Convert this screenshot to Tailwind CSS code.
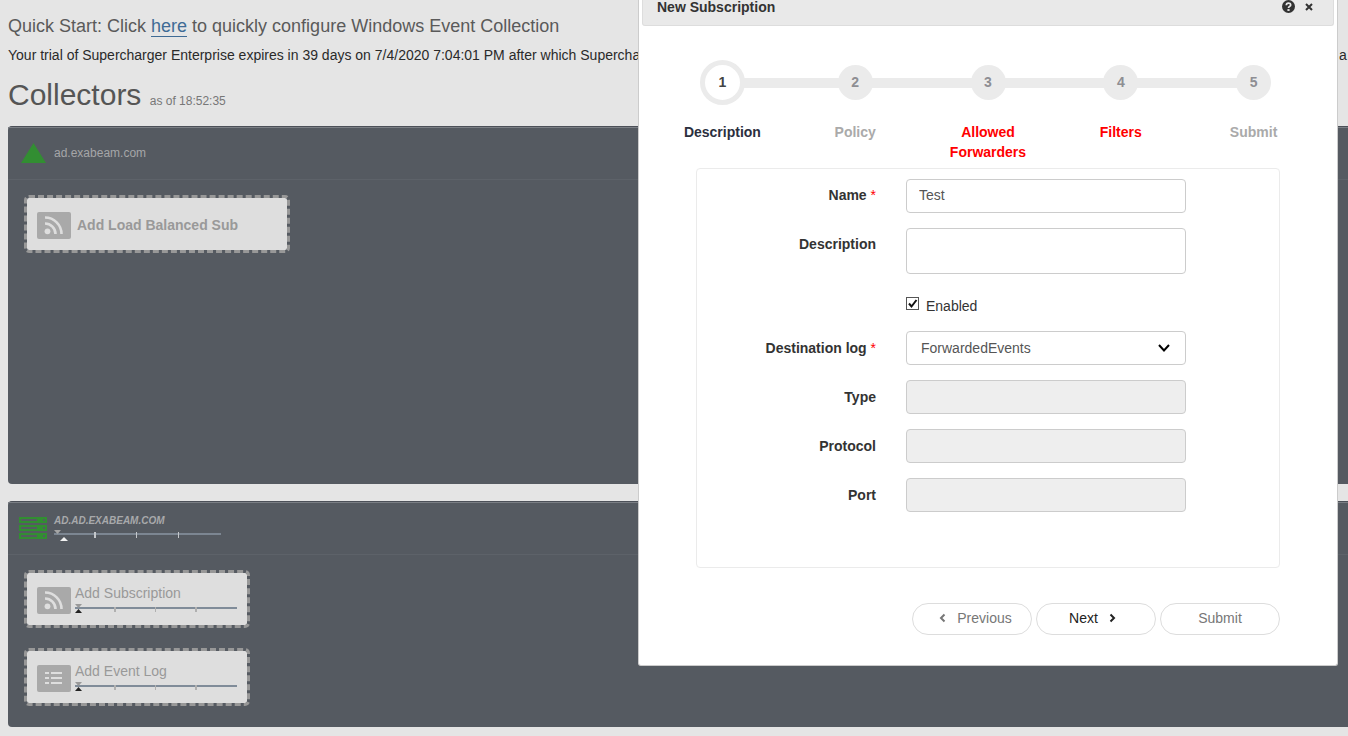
<!DOCTYPE html>
<html lang="en">
<head>
    <meta charset="UTF-8">
    <meta name="viewport" content="width=device-width, initial-scale=1.0">
    <title>Supercharger - Collectors</title>
    <script src="https://cdn.jsdelivr.net/npm/@tailwindcss/browser@4"></script>
</head>
<body class="relative min-h-screen overflow-x-hidden bg-[#e5e5e5] font-['Liberation_Sans',Arial,sans-serif] text-sm text-[#333]">

    <main class="pl-2 pt-4">
        <h4 class="text-lg leading-5 text-[#5a5a5a]">Quick Start: Click <a href="#" class="border-b border-[#3f6b95] text-[#3f6b95]">here</a> to quickly configure Windows Event Collection</h4>
        <p class="mt-[9px] flex overflow-hidden whitespace-nowrap leading-5 text-[#2a2a2a]">
            <span class="flex-1 overflow-hidden">Your trial of Supercharger Enterprise expires in 39 days on 7/4/2020 7:04:01 PM after which Supercharger</span>
            <span class="w-[9px]">a</span>
        </p>
        <h1 class="mt-[13px] text-[30px] leading-[33px] text-[#555]">Collectors <small class="text-xs text-[#777]">as of 18:52:35</small></h1>

        <!-- domain -->
        <section class="mt-[15px] h-[358px] rounded-l border-t border-[#4c5058] bg-[#555a61]">
            <header class="flex h-[53px] items-center gap-2 border-b border-t border-b-[#5d6269] border-t-[#7b7f85] pb-[2px] pl-[13px]">
                <svg class="h-5 w-[25px]" viewBox="0 0 25 20" fill="#328e32"><path d="M12.500 0 L25 20 H0Z"/></svg>
                <span class="text-xs text-[#a5a6a8]">ad.exabeam.com</span>
            </header>
            <div class="px-4 py-[15px]">
                <button type="button" class="flex h-[58px] w-[266px] items-center gap-[6px] rounded-[5px] border-3 border-dashed border-[#989898] bg-[#dedede] bg-clip-padding px-[10px] pt-[2px] font-bold text-[#999]">
                    <svg class="h-[27px] w-[34px]" viewBox="0 0 34 27"><rect width="34" height="27" rx="2" fill="#a9a9a9"/><circle cx="10.500" cy="19.300" r="2.900" fill="#dedede"/><g fill="none" stroke="#dedede" stroke-width="2.600"><path d="M8 11.500A10.500 10.500 0 0 1 18.500 22"/><path d="M8 5.500A16.500 16.500 0 0 1 24.500 22"/></g></svg>
                    Add Load Balanced Sub
                </button>
            </div>
        </section>

        <!-- collector -->
        <section class="mt-[17px] h-[226px] rounded-l border-t border-[#4c5058] bg-[#555a61]">
            <header class="flex h-[53px] items-center gap-[7px] border-b border-t border-b-[#5d6269] border-t-[#7b7f85] pb-[2px] pl-[11px]">
                <svg class="h-[22px] w-7" viewBox="0 0 28 22">
                    <path fill="#328e32" d="M0 0h28v6H0zM0 8h28v6H0zM0 16h28v6H0z"/>
                    <path fill="#555a61" d="M2 2h16v2H2zM24 2h2v2h-2zM2 10h16v2H2zM24 10h2v2h-2zM2 18h16v2H2zM24 18h2v2h-2z"/>
                </svg>
                <div>
                    <div class="text-[10px] font-bold italic leading-3 text-[#a8a9ab]">AD.AD.EXABEAM.COM</div>
                    <svg class="h-[14px] w-[167px]" viewBox="0 0 167 14">
                        <path fill="#7c8692" d="M0 6h167v2H0z"/>
                        <path fill="#c4c7cb" d="M40 5h2v6h-2zM82 5h1v6h-1zM124 5h1v6h-1z"/>
                        <path fill="#a5a5a5" d="M0 3h7L3.500 7z"/>
                        <path fill="#f2f2f2" d="M6 14h8l-4-4z"/>
                    </svg>
                </div>
            </header>
            <div class="flex flex-col gap-5 px-4 py-[15px]">
                <button type="button" class="flex h-[58px] w-[226px] items-center gap-1 rounded-[5px] border-3 border-dashed border-[#989898] bg-[#dedede] bg-clip-padding px-[10px] pt-[2px] text-left text-[#999]">
                    <svg class="h-[27px] w-[34px]" viewBox="0 0 34 27"><rect width="34" height="27" rx="2" fill="#a9a9a9"/><circle cx="10.500" cy="19.300" r="2.900" fill="#dedede"/><g fill="none" stroke="#dedede" stroke-width="2.600"><path d="M8 11.500A10.500 10.500 0 0 1 18.500 22"/><path d="M8 5.500A16.500 16.500 0 0 1 24.500 22"/></g></svg>
                    <span class="flex flex-col gap-px pb-[3px]">
                        <span class="leading-5">Add Subscription</span>
                        <svg class="h-[10px] w-[162px]" viewBox="0 0 162 10">
                            <path fill="#808c99" d="M0 3h162v2H0z"/>
                            <path fill="#b0b0b0" d="M39 3h2v5h-2zM80 3h1v5h-1zM120 3h2v5h-2z"/>
                            <path fill="#999" d="M0 0h7L3.500 4z"/>
                            <path fill="#222" d="M0 9h7L3.500 5z"/>
                        </svg>
                    </span>
                </button>
                <button type="button" class="flex h-[58px] w-[226px] items-center gap-1 rounded-[5px] border-3 border-dashed border-[#989898] bg-[#dedede] bg-clip-padding px-[10px] pt-[2px] text-left text-[#999]">
                    <svg class="h-[27px] w-[34px]" viewBox="0 0 34 27"><rect width="34" height="27" rx="2" fill="#a9a9a9"/><path fill="#dedede" d="M8 7h4v2H8zM14 7h11v2H14zM8 12h4v2H8zM14 12h11v2H14zM8 17h4v2H8zM14 17h11v2H14z"/></svg>
                    <span class="flex flex-col gap-px pb-[3px]">
                        <span class="leading-5">Add Event Log</span>
                        <svg class="h-[10px] w-[162px]" viewBox="0 0 162 10">
                            <path fill="#808c99" d="M0 3h162v2H0z"/>
                            <path fill="#b0b0b0" d="M39 3h2v5h-2zM80 3h1v5h-1zM120 3h2v5h-2z"/>
                            <path fill="#999" d="M0 0h7L3.500 4z"/>
                            <path fill="#222" d="M0 9h7L3.500 5z"/>
                        </svg>
                    </span>
                </button>
            </div>
        </section>
    </main>

    <!-- new subscription dialog -->
    <div role="dialog" aria-labelledby="dialog-title" class="absolute right-[10px] top-0 w-[700px] rounded-b-[3px] border border-t-0 border-[#ccc] bg-white">
        <div class="mx-[3px] flex h-[26px] items-start justify-between rounded-b-[3px] border border-t-0 border-[#ddd] bg-[#e9e9e9] px-[14px] leading-[14px]">
            <h2 id="dialog-title" class="font-bold">New Subscription</h2>
            <div class="flex gap-2 pr-1">
                <button type="button" aria-label="Help">
                    <svg class="size-[13px]" viewBox="0 0 12 12"><circle cx="6" cy="6" r="6" fill="#333"/><path d="M4 4.800C4 2.200 8 2.200 8 4.600C8 6 6 5.800 6 7.400" fill="none" stroke="#e9e9e9" stroke-width="1.600"/><path fill="#e9e9e9" d="M5 8.400h2v1.700H5z"/></svg>
                </button>
                <button type="button" aria-label="Close">
                    <svg class="size-3" viewBox="0 0 12 12"><path d="M3 3l6 6M9 3l-6 6" stroke="#333" stroke-width="2"/></svg>
                </button>
            </div>
        </div>

        <ol class="mx-[17px] mt-[34px] grid grid-cols-5 text-center font-bold leading-5 text-[#aaa]">
            <li>
                <div class="flex h-[45px] items-center">
                    <span class="-mx-px flex-1"></span>
                    <span class="flex size-[45px] items-center justify-center rounded-full border-5 border-[#ebebeb] pb-[2px] text-[#444]">1</span>
                    <span class="-mx-px h-[10px] flex-1 bg-[#ebebeb]"></span>
                </div>
                <div class="mt-[17px] text-[#2b2f3e]">Description</div>
            </li>
            <li>
                <div class="flex h-[45px] items-center">
                    <span class="-mx-px h-[10px] flex-1 bg-[#ebebeb]"></span>
                    <span class="flex size-[35px] items-center justify-center rounded-full bg-[#ebebeb] pb-[2px] text-[#8e8e93]">2</span>
                    <span class="-mx-px h-[10px] flex-1 bg-[#ebebeb]"></span>
                </div>
                <div class="mt-[17px]">Policy</div>
            </li>
            <li>
                <div class="flex h-[45px] items-center">
                    <span class="-mx-px h-[10px] flex-1 bg-[#ebebeb]"></span>
                    <span class="flex size-[35px] items-center justify-center rounded-full bg-[#ebebeb] pb-[2px] text-[#8e8e93]">3</span>
                    <span class="-mx-px h-[10px] flex-1 bg-[#ebebeb]"></span>
                </div>
                <div class="mt-[17px] text-[#f00]">Allowed<br>Forwarders</div>
            </li>
            <li>
                <div class="flex h-[45px] items-center">
                    <span class="-mx-px h-[10px] flex-1 bg-[#ebebeb]"></span>
                    <span class="flex size-[35px] items-center justify-center rounded-full bg-[#ebebeb] pb-[2px] text-[#8e8e93]">4</span>
                    <span class="-mx-px h-[10px] flex-1 bg-[#ebebeb]"></span>
                </div>
                <div class="mt-[17px] text-[#f00]">Filters</div>
            </li>
            <li>
                <div class="flex h-[45px] items-center">
                    <span class="-mx-px h-[10px] flex-1 bg-[#ebebeb]"></span>
                    <span class="flex size-[35px] items-center justify-center rounded-full bg-[#ebebeb] pb-[2px] text-[#8e8e93]">5</span>
                    <span class="-mx-px flex-1"></span>
                </div>
                <div class="mt-[17px]">Submit</div>
            </li>
        </ol>

        <form class="px-[57px] pb-[30px] pt-[6px]">
            <div class="grid grid-cols-[179px_280px] gap-x-[30px] gap-y-[15px] rounded border border-[#ebebeb] pb-[55px] pt-[10px]">
                <label for="name" class="pt-[6px] text-right font-bold leading-5">Name <span class="font-normal text-[#f00]">*</span></label>
                <input id="name" type="text" value="Test" class="h-[34px] rounded border border-[#ccc] px-3 pb-[2px] text-[#555]">

                <label for="description" class="pt-[6px] text-right font-bold leading-5">Description</label>
                <textarea id="description" class="h-[46px] resize-none rounded border border-[#ccc] px-3 py-[6px] text-[#555]"></textarea>

                <div class="col-start-2 flex gap-[7px] pt-2">
                    <span class="relative h-[13px] w-[13px]">
                        <input id="enabled" type="checkbox" checked class="block size-[13px] appearance-none border border-[#555] bg-white">
                        <svg class="pointer-events-none absolute left-0 top-0 size-[13px]" viewBox="0 0 13 13"><path d="M3 6.500L5.500 9.500L10.500 3" fill="none" stroke="#111" stroke-width="2"/></svg>
                    </span>
                    <label for="enabled" class="leading-[19px]">Enabled</label>
                </div>

                <label for="log" class="pt-[7px] text-right font-bold leading-5">Destination log <span class="font-normal text-[#f00]">*</span></label>
                <div class="relative">
                    <select id="log" class="block h-[34px] w-full appearance-none rounded border border-[#ccc] bg-white px-[14px] text-[#555]">
                        <option>ForwardedEvents</option>
                    </select>
                    <svg class="pointer-events-none absolute right-4 top-3 h-[10px] w-3" viewBox="0 0 12 10"><path d="M1 2l5 5.500L11 2" fill="none" stroke="#000" stroke-width="2"/></svg>
                </div>

                <label for="type" class="pt-[7px] text-right font-bold leading-5">Type</label>
                <input id="type" type="text" disabled class="h-[34px] rounded border border-[#ccc] bg-[#eee] px-3">

                <label for="protocol" class="pt-[7px] text-right font-bold leading-5">Protocol</label>
                <input id="protocol" type="text" disabled class="h-[34px] rounded border border-[#ccc] bg-[#eee] px-3">

                <label for="port" class="pt-[7px] text-right font-bold leading-5">Port</label>
                <input id="port" type="text" disabled class="h-[34px] rounded border border-[#ccc] bg-[#eee] px-3">
            </div>

            <div class="mt-[35px] flex justify-end gap-1">
                <button type="button" disabled class="flex h-8 w-[120px] items-center justify-center gap-[11px] rounded-full border border-[#ddd] pb-[2px] text-[#777]">
                    <svg class="h-[10px] w-[14px]" viewBox="0 0 14 10"><path d="M12.500 1.500L9 5l3.500 3.500" fill="none" stroke="#777" stroke-width="2"/></svg>
                    Previous
                </button>
                <button type="button" class="flex h-8 w-[120px] items-center justify-center gap-[11px] rounded-full border border-[#ddd] pb-[2px] text-[#222]">
                    Next
                    <svg class="h-[10px] w-[14px]" viewBox="0 0 14 10"><path d="M1.500 1.500L5 5L1.500 8.500" fill="none" stroke="#222" stroke-width="2"/></svg>
                </button>
                <button type="submit" disabled class="h-8 w-[120px] rounded-full border border-[#ddd] pb-[2px] text-[#777]">Submit</button>
            </div>
        </form>
    </div>

</body>
</html>
